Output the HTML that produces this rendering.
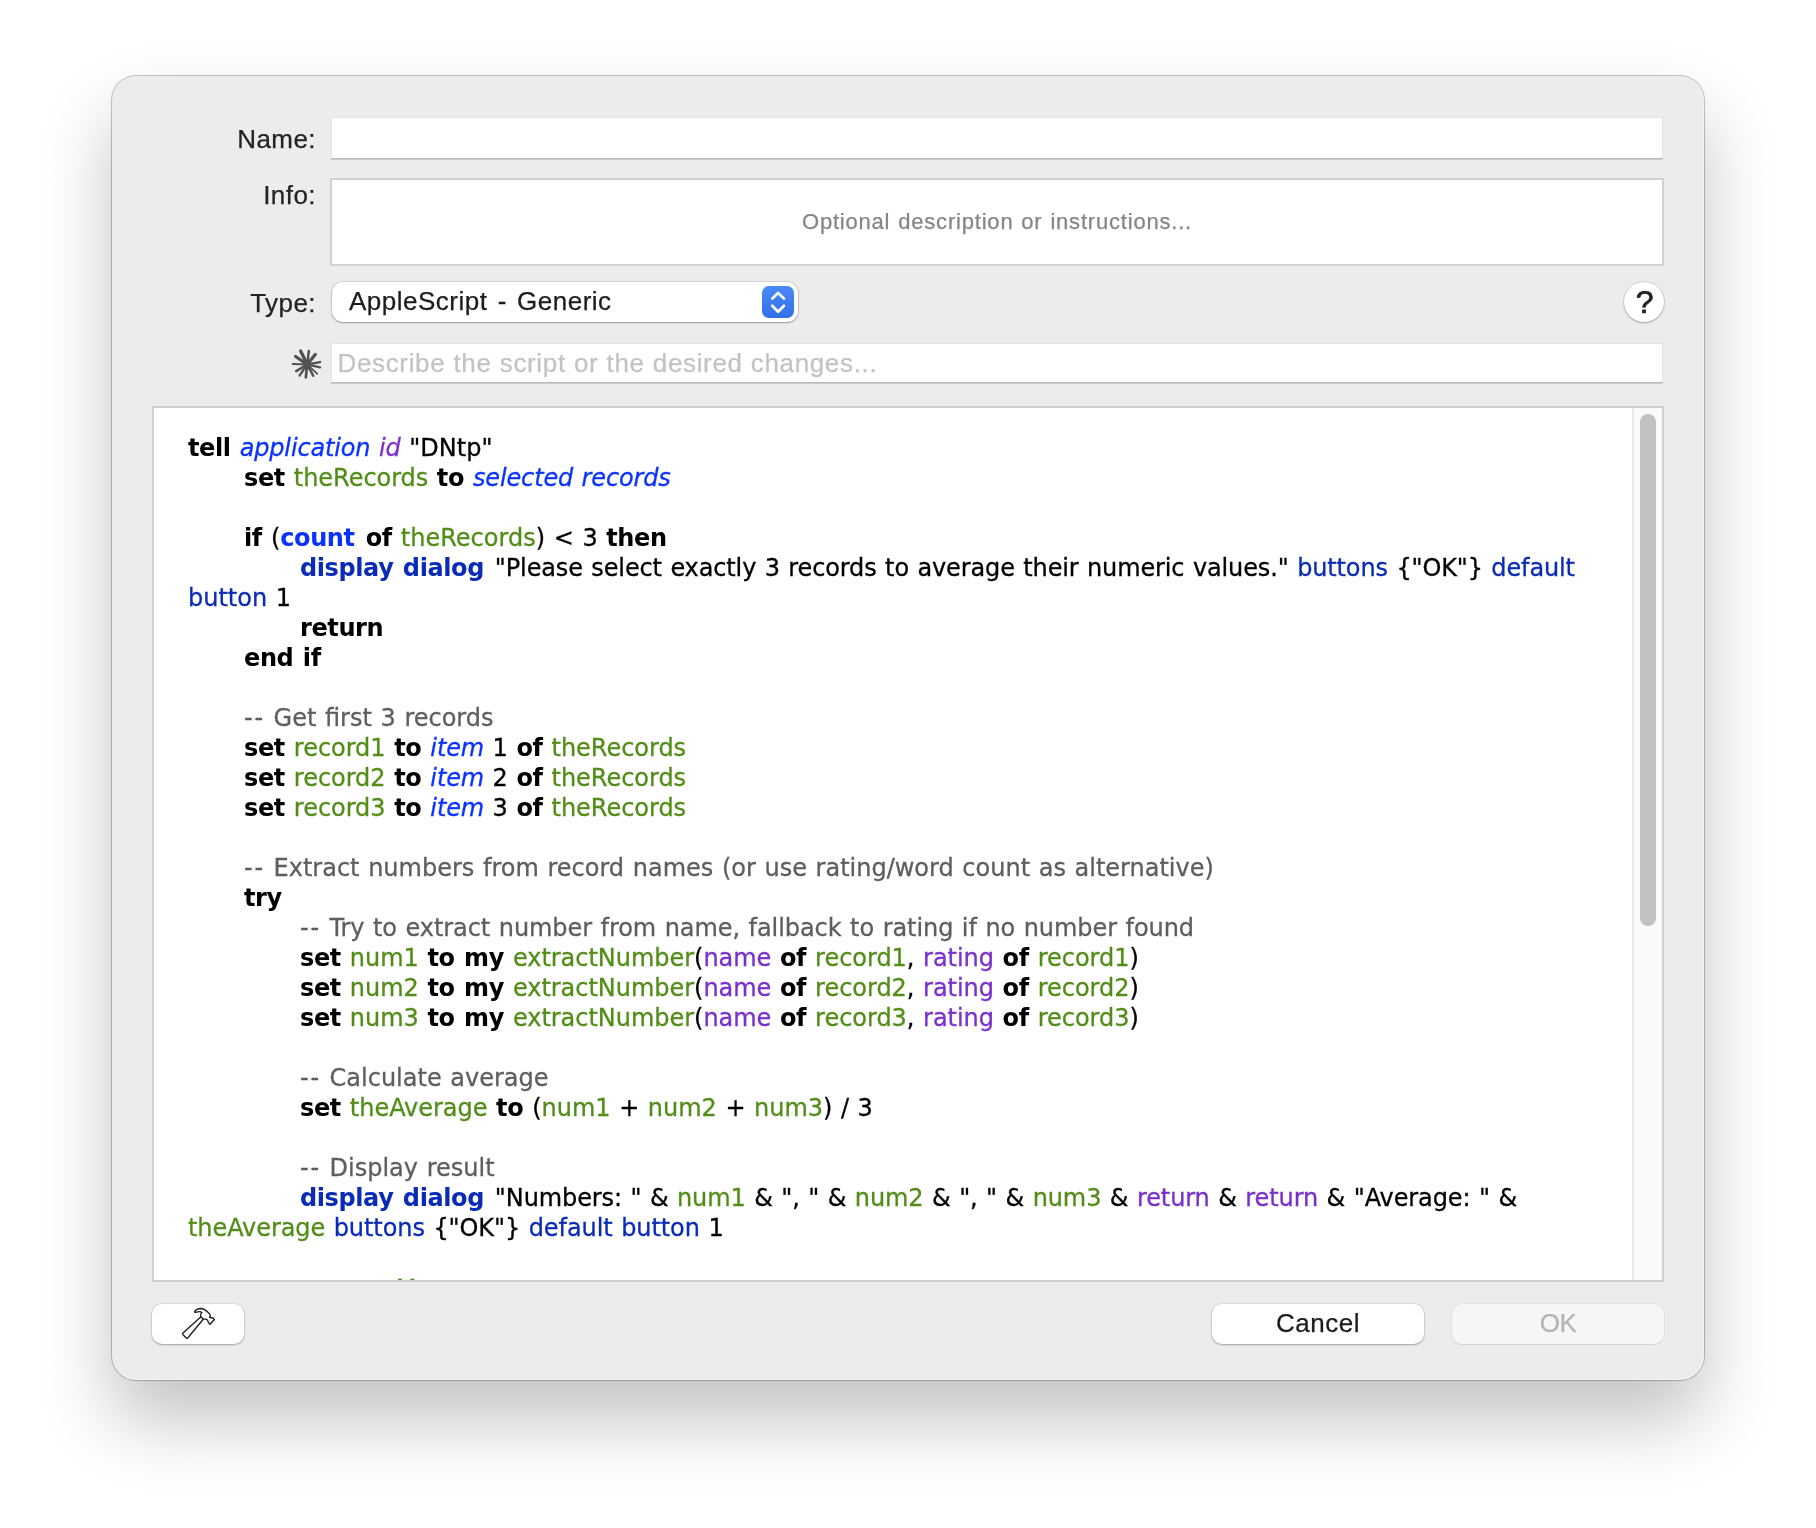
<!DOCTYPE html>
<html lang="en">
<head>
<meta charset="utf-8">
<title>Script Dialog</title>
<style>
html,body{margin:0;padding:0;}
body{width:1816px;height:1528px;background:#fff;position:relative;overflow:hidden;
  font-family:"Liberation Sans",sans-serif;color:#262626;-webkit-text-stroke:0.25px;}
#win{will-change:transform;position:absolute;left:112px;top:76px;width:1592px;height:1304px;border-radius:24px;
  background:#ececec;
  box-shadow:inset -1px -1px 0 rgba(255,255,255,.4), 0 0 0 1px rgba(0,0,0,.23), 0 40px 72px rgba(0,0,0,.24);}
.abs{position:absolute;}
.lbl{position:absolute;font-size:26px;line-height:30px;height:30px;text-align:right;width:200px;left:4px;letter-spacing:0.45px;white-space:nowrap;color:#242424;}
.field{position:absolute;background:#fff;box-sizing:border-box;}
.tf{border:1px solid #e3e3e3;border-bottom-color:#b8b8b8;box-shadow:0 1px 0 rgba(0,0,0,.13);}
#info{border:2px solid #d1d1d1;}
.ph{position:absolute;white-space:nowrap;}
#popup{position:absolute;left:220px;top:207px;width:466px;height:40px;border-radius:11px;background:#fff;
  box-shadow:0 0 0 1px rgba(0,0,0,.06), 0 1px 2px rgba(0,0,0,.28), 0 0 2px rgba(0,0,0,.12);}
#popup .t{position:absolute;left:17px;top:4px;font-size:26px;line-height:30px;color:#1c1c1c;white-space:nowrap;letter-spacing:0.5px;word-spacing:2.5px;}
#popup .b{position:absolute;left:430px;top:4px;width:32px;height:32px;border-radius:7px;
  background:linear-gradient(#4a8af7,#306fe6);}
#help{position:absolute;left:1512px;top:207px;width:40px;height:40px;border-radius:20px;background:#fff;
  box-shadow:0 0 0 1px rgba(0,0,0,.05), 0 1px 2px rgba(0,0,0,.26), 0 0 2px rgba(0,0,0,.10);}
#help span{position:absolute;left:0.7px;width:40px;text-align:center;top:3px;font-size:32px;line-height:34px;color:#222;-webkit-text-stroke:0.7px #222;}
#code{position:absolute;left:40px;top:331px;width:1512px;height:876px;box-sizing:border-box;border:2px solid #d0d0d0;background:#fff;overflow:hidden;}
#track{position:absolute;left:1478px;top:0;width:30px;height:872px;background:#fafafa;box-sizing:border-box;border-left:2px solid #e9e9e9;}
#thumb{position:absolute;left:6px;top:6px;width:16px;height:512px;border-radius:8px;background:#c2c2c2;}
.ln{position:absolute;white-space:pre;font-family:"DejaVu Sans","Liberation Sans",sans-serif;font-size:24px;line-height:30px;height:30px;color:#000;word-spacing:1px;-webkit-text-stroke:0.3px;}
.k,.cmd,.cnt{letter-spacing:-0.4px;word-spacing:1.5px;margin-right:0.4px;}
.cmd,.cnt{margin-right:2.4px;}
.k,.cmd,.cnt{-webkit-text-stroke:0;}
.k{font-weight:bold;}
.c{font-style:oblique;color:#0a32ff;letter-spacing:-0.15px;}
.p{font-style:oblique;color:#8030cc;letter-spacing:-0.15px;}
.v{color:#528d18;}
.cmd{font-weight:bold;color:#0a2bb8;}
.par{color:#0a2bb8;}
.pr{color:#7a2fd0;}
.cm{color:#5e5e5e;}
.hy{letter-spacing:1.8px;}
.cnt{font-weight:bold;color:#0a32ff;}
.btn{position:absolute;top:1229px;height:40px;border-radius:10px;background:#fff;
  box-shadow:0 0 0 1px rgba(0,0,0,.035), 0 1px 2px rgba(0,0,0,.27), 0 0 2px rgba(0,0,0,.09);
  font-size:26px;line-height:38px;text-align:center;color:#1c1c1c;letter-spacing:0.5px;}
</style>
</head>
<body>
<div id="win"><div id="inner" style="position:absolute;left:0;top:-1px;width:1592px;height:1305px;">
  <div class="lbl" style="top:49px;">Name:</div>
  <div class="field tf" style="left:219px;top:42px;width:1332px;height:42px;"></div>

  <div class="lbl" style="top:105px;">Info:</div>
  <div class="field" id="info" style="left:218px;top:103px;width:1334px;height:88px;"></div>
  <div class="ph" style="left:220px;width:1330px;text-align:center;top:133px;font-size:22px;line-height:28px;color:#858585;letter-spacing:0.8px;word-spacing:1px;">Optional description or instructions...</div>

  <div class="lbl" style="top:213px;">Type:</div>
  <div id="popup"><span class="t">AppleScript - Generic</span><div class="b">
    <svg width="32" height="32" viewBox="0 0 32 32" style="position:absolute;left:0;top:0"><path d="M10.2 12.6 L16.1 6.9 L22 12.6 M10.2 19.8 L16.1 25.8 L22 19.8" fill="none" stroke="#fff" stroke-width="2.7" stroke-linecap="round" stroke-linejoin="round"/></svg>
  </div></div>
  <div id="help"><span>?</span></div>

  <svg class="abs" style="left:172px;top:267px;" width="46" height="44" viewBox="-23.2 -22.5 46 44">
    <g stroke="#525252" stroke-linecap="round"><line x1="0" y1="0" x2="-6.56" y2="-13.52" stroke-width="3.3"/><line x1="0" y1="0" x2="1.64" y2="-13.53" stroke-width="2.5"/><line x1="0" y1="0" x2="8.07" y2="-10.05" stroke-width="3.3"/><line x1="0" y1="0" x2="12.86" y2="-2.48" stroke-width="2.3"/><line x1="0" y1="0" x2="12.86" y2="2.76" stroke-width="2.3"/><line x1="0" y1="0" x2="10.14" y2="9.26" stroke-width="1.7"/><line x1="0" y1="0" x2="5.95" y2="11.14" stroke-width="2.5"/><line x1="0" y1="0" x2="-1.35" y2="12.95" stroke-width="2.7"/><line x1="0" y1="0" x2="-7.70" y2="11.14" stroke-width="2.3"/><line x1="0" y1="0" x2="-11.03" y2="6.67" stroke-width="2.5"/><line x1="0" y1="0" x2="-14.44" y2="-0.56" stroke-width="2.1"/><line x1="0" y1="0" x2="-11.55" y2="-8.00" stroke-width="3.3"/></g><circle cx="0" cy="0" r="3.8" fill="#525252"/>
  </svg>
  <div class="field tf" style="left:219px;top:268px;width:1332px;height:40px;"></div>
  <div class="ph" style="left:225.5px;top:273px;font-size:26px;line-height:30px;color:#c3c3c3;letter-spacing:0.65px;word-spacing:0.3px;">Describe the script or the desired changes...</div>

  <div id="code">
    <div id="lines">
    <div class="ln" style="left:34px;top:25px;"><span class="k">tell</span> <span class="c">application</span> <span class="p">id</span> &quot;DNtp&quot;</div>
    <div class="ln" style="left:90px;top:55px;letter-spacing:-0.04px;"><span class="k">set</span> <span class="v">theRecords</span> <span class="k">to</span> <span class="c">selected records</span></div>
    <div class="ln" style="left:90px;top:115px;"><span class="k">if</span> (<span class="cnt">count</span> <span class="k">of</span> <span class="v">theRecords</span>) &lt; 3 <span class="k">then</span></div>
    <div class="ln" style="left:146px;top:145px;letter-spacing:-0.13px;"><span class="cmd">display dialog</span> &quot;Please select exactly 3 records to average their numeric values.&quot; <span class="par">buttons</span> {&quot;OK&quot;} <span class="par">default</span></div>
    <div class="ln" style="left:34px;top:175px;"><span class="par">button</span> 1</div>
    <div class="ln" style="left:146px;top:205px;"><span class="k">return</span></div>
    <div class="ln" style="left:90px;top:235px;"><span class="k">end if</span></div>
    <div class="ln" style="left:90px;top:295px;"><span class="cm"><span class="hy">--</span> Get first 3 records</span></div>
    <div class="ln" style="left:90px;top:325px;letter-spacing:-0.03px;"><span class="k">set</span> <span class="v">record1</span> <span class="k">to</span> <span class="c">item</span> 1 <span class="k">of</span> <span class="v">theRecords</span></div>
    <div class="ln" style="left:90px;top:355px;letter-spacing:-0.03px;"><span class="k">set</span> <span class="v">record2</span> <span class="k">to</span> <span class="c">item</span> 2 <span class="k">of</span> <span class="v">theRecords</span></div>
    <div class="ln" style="left:90px;top:385px;letter-spacing:-0.03px;"><span class="k">set</span> <span class="v">record3</span> <span class="k">to</span> <span class="c">item</span> 3 <span class="k">of</span> <span class="v">theRecords</span></div>
    <div class="ln" style="left:90px;top:445px;"><span class="cm"><span class="hy">--</span> Extract numbers from record names (or use rating/word count as alternative)</span></div>
    <div class="ln" style="left:90px;top:475px;"><span class="k">try</span></div>
    <div class="ln" style="left:146px;top:505px;letter-spacing:-0.07px;"><span class="cm"><span class="hy">--</span> Try to extract number from name, fallback to rating if no number found</span></div>
    <div class="ln" style="left:146px;top:535px;letter-spacing:-0.03px;"><span class="k">set</span> <span class="v">num1</span> <span class="k">to my</span> <span class="v">extractNumber</span>(<span class="pr">name</span> <span class="k">of</span> <span class="v">record1</span>, <span class="pr">rating</span> <span class="k">of</span> <span class="v">record1</span>)</div>
    <div class="ln" style="left:146px;top:565px;letter-spacing:-0.03px;"><span class="k">set</span> <span class="v">num2</span> <span class="k">to my</span> <span class="v">extractNumber</span>(<span class="pr">name</span> <span class="k">of</span> <span class="v">record2</span>, <span class="pr">rating</span> <span class="k">of</span> <span class="v">record2</span>)</div>
    <div class="ln" style="left:146px;top:595px;letter-spacing:-0.03px;"><span class="k">set</span> <span class="v">num3</span> <span class="k">to my</span> <span class="v">extractNumber</span>(<span class="pr">name</span> <span class="k">of</span> <span class="v">record3</span>, <span class="pr">rating</span> <span class="k">of</span> <span class="v">record3</span>)</div>
    <div class="ln" style="left:146px;top:655px;"><span class="cm"><span class="hy">--</span> Calculate average</span></div>
    <div class="ln" style="left:146px;top:685px;letter-spacing:-0.03px;"><span class="k">set</span> <span class="v">theAverage</span> <span class="k">to</span> (<span class="v">num1</span> + <span class="v">num2</span> + <span class="v">num3</span>) / 3</div>
    <div class="ln" style="left:146px;top:745px;"><span class="cm"><span class="hy">--</span> Display result</span></div>
    <div class="ln" style="left:146px;top:775px;letter-spacing:-0.11px;"><span class="cmd">display dialog</span> &quot;Numbers: &quot; &amp; <span class="v">num1</span> &amp; &quot;, &quot; &amp; <span class="v">num2</span> &amp; &quot;, &quot; &amp; <span class="v">num3</span> &amp; <span class="pr">return</span> &amp; <span class="pr">return</span> &amp; &quot;Average: &quot; &amp;</div>
    <div class="ln" style="left:34px;top:805px;letter-spacing:-0.08px;"><span class="v">theAverage</span> <span class="par">buttons</span> {&quot;OK&quot;} <span class="par">default button</span> 1</div>
    <div class="ln" style="left:90px;top:866px;"><span class="k">on error</span> <span class="v">errMsg</span></div>
    </div><!--L-->
    <div id="track"><div id="thumb"></div></div>
  </div>

  <div class="btn" style="left:40px;width:92px;" id="hammer"><svg style="position:absolute;left:24px;top:-2px" width="46" height="40" viewBox="0 0 46 40" fill="none" stroke="#1e1e1e" stroke-width="1.35" stroke-linejoin="round" stroke-linecap="round">
    <path d="M18.6 9.6 C19.5 8.0 22 6.6 25 6.5 C28.5 6.5 31 9.3 33.5 11.8 C34.3 12.8 34.6 14 33.6 15.2 C34.5 16.2 35.6 15.6 36.6 15.7 L38.4 17.5 L34.0 22.2 L32.3 20.6 C32.3 19.5 31.8 18.3 30.9 17.4 C29.8 17.0 28.5 17.3 27.2 16.8 C25.8 16.0 24.8 15.0 24.6 13.8 C24.4 12.5 25.0 11.4 25.9 10.5 C24.5 9.3 22 9.6 20.4 10.1 C19.6 10.4 18.3 10.6 18.6 9.6 Z"/>
    <path d="M24.7 14.9 L7.0 31.0 Q6.2 31.9 7.0 32.8 L10.3 36.0 Q11.1 36.7 11.9 35.8 L27.2 17.3"/>
  </svg></div>
  <div class="btn" style="left:1100px;width:212px;">Cancel</div>
  <div class="btn" style="left:1340px;width:212px;background:#f6f6f6;color:#b4b4b4;letter-spacing:-0.6px;box-shadow:0 0 0 1px rgba(0,0,0,.03), 0 1px 1px rgba(0,0,0,.08);">OK</div>
</div></div>
</body>
</html>
